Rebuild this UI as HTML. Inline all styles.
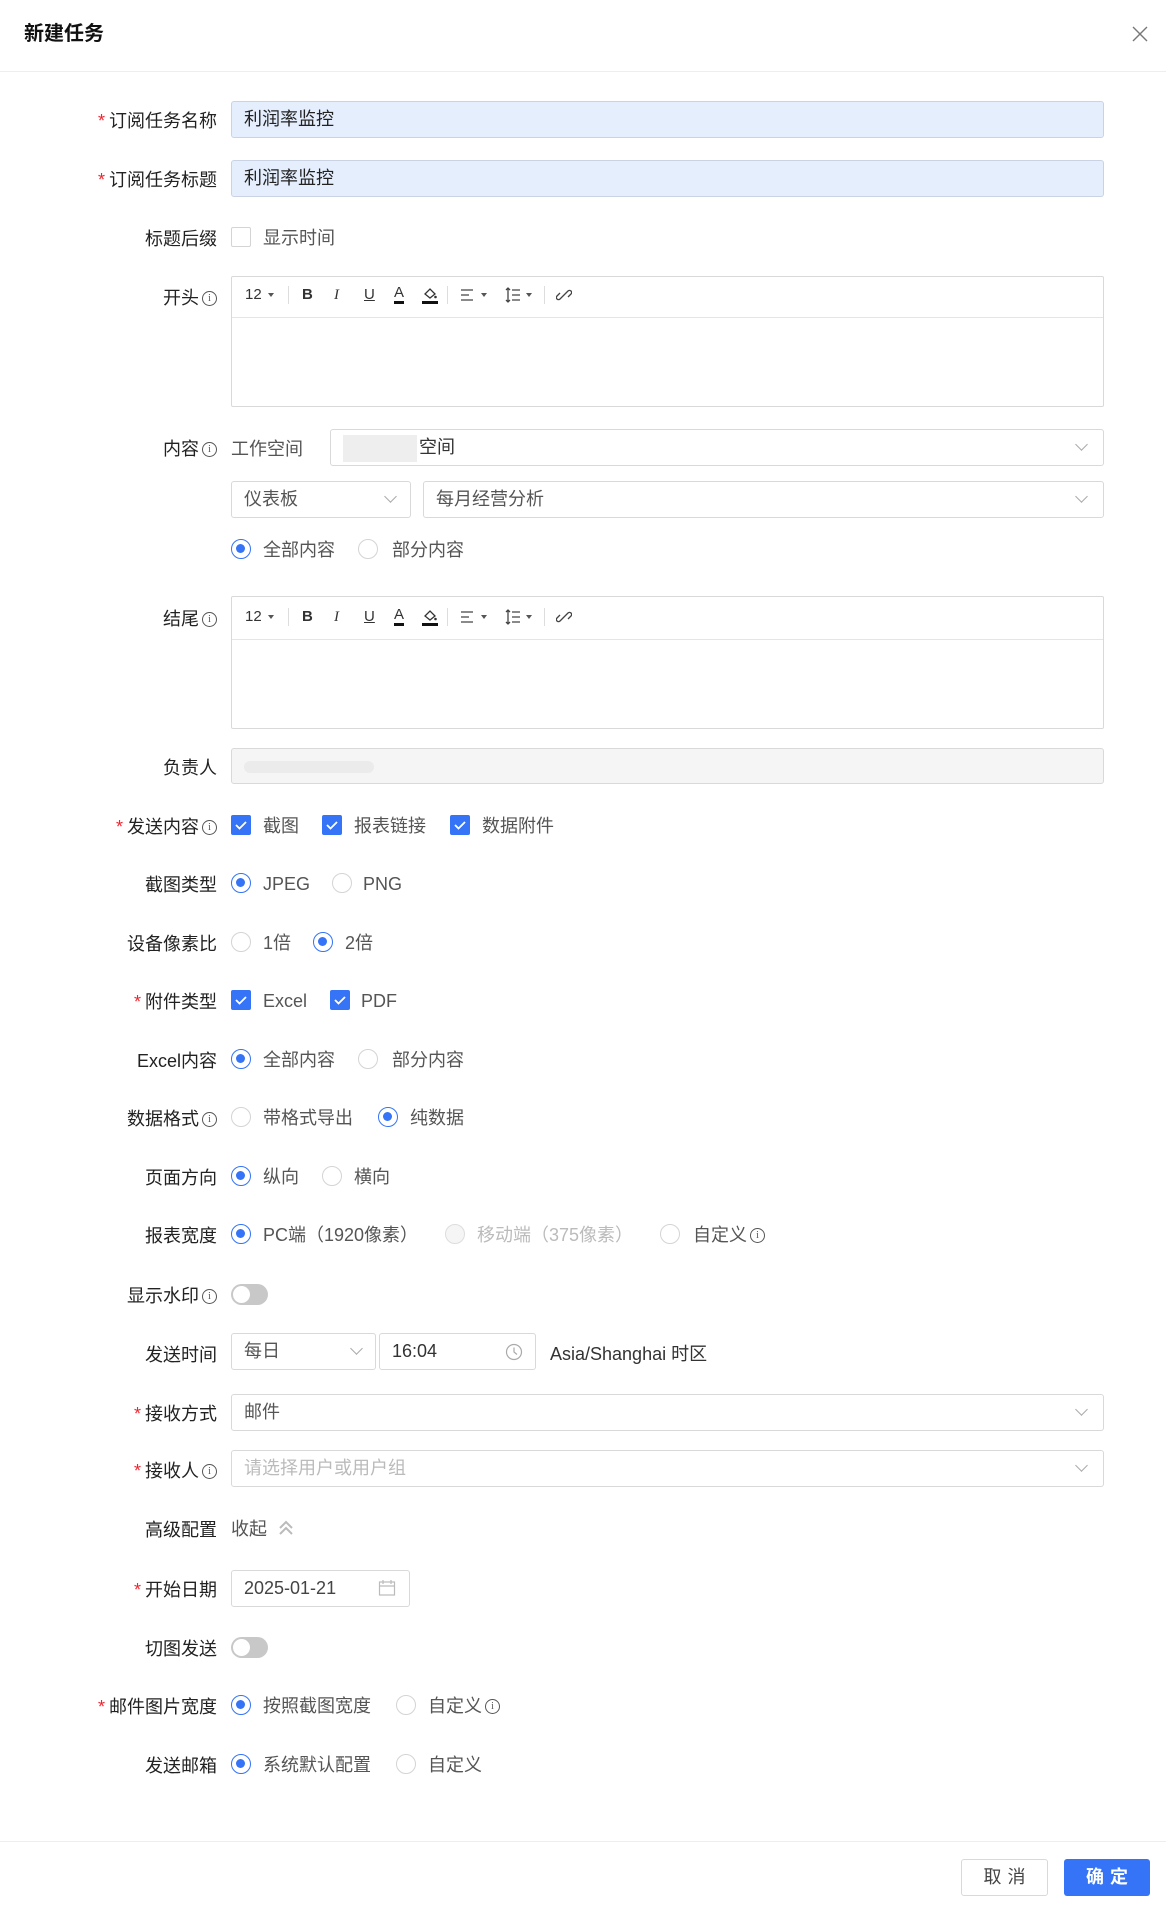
<!DOCTYPE html>
<html><head><meta charset="utf-8"><style>
*{box-sizing:border-box;margin:0;padding:0}
body{width:1166px;height:1912px;background:#fff;font-family:"Liberation Sans","Noto Sans CJK SC",sans-serif;color:#333;position:relative;overflow:hidden;font-size:18px}
.a{position:absolute}
.lb{position:absolute;right:949px;height:26px;line-height:26px;text-align:right;white-space:nowrap;color:#222;margin-top:2px}
.st{color:#f5222d;margin-right:4px}
.t{position:absolute;height:26px;line-height:26px;white-space:nowrap;color:#555;margin-top:1px}
.inp{position:absolute;border:1px solid #d9d9d9;border-radius:3px;background:#fff;padding-left:12px;line-height:35px;color:#333}
.blue{background:#e5eefd;border-color:#c9d3e3;color:#222}
.r{position:absolute;width:20px;height:20px;border:1px solid #d4d4d4;border-radius:50%;background:#fff}
.r.on{border:1.5px solid #3574f6}
.r.on:after{content:"";position:absolute;left:4px;top:4px;width:9px;height:9px;border-radius:50%;background:#3574f6}
.r.dis{background:#f5f5f5;border-color:#ddd}
.cb{position:absolute;width:20px;height:20px;border-radius:2px;background:#3574f6}
.cb svg{position:absolute;left:3px;top:3px}
.cbo{position:absolute;width:20px;height:20px;border:1px solid #d4d4d4;border-radius:2px;background:#fff}
.i{display:inline-block;width:15px;height:15px;border:1.3px solid #555;border-radius:50%;font-size:10px;line-height:13px;text-align:center;vertical-align:3px;margin-left:3px;font-family:"Liberation Serif",serif;color:#555;font-weight:normal}
.chev{position:absolute;width:9px;height:9px;border-right:1.3px solid #aaa;border-bottom:1.3px solid #aaa;transform:rotate(45deg)}
.tg{position:absolute;width:37px;height:21px;border-radius:11px;background:#c8c8c8}
.tg:after{content:"";position:absolute;left:2px;top:2px;width:17px;height:17px;border-radius:50%;background:#fff}
.ed{position:absolute;left:231px;width:873px;border:1px solid #d9d9d9;border-radius:2px}
.tb{position:absolute;font-size:15px;color:#333;line-height:20px}
.sep{position:absolute;width:1px;height:18px;background:#ddd}
.car{position:absolute;width:0;height:0;border-left:3.5px solid transparent;border-right:3.5px solid transparent;border-top:4px solid #555}
</style></head><body>
<div class="a" style="left:24px;top:21px;font-size:20px;font-weight:bold;color:#111;line-height:26px">新建任务</div>
<svg class="a" style="left:1132px;top:26px" width="16" height="16"><path d="M1 1L15 15M15 1L1 15" stroke="#777" stroke-width="1.4"/></svg>
<div class="a" style="left:0;top:71px;width:1166px;height:1px;background:#eee"></div>

<div class="lb" style="top:106px"><span class="st">*</span>订阅任务名称</div>
<div class="inp blue" style="left:231px;top:101px;width:873px;height:37px">利润率监控</div>
<div class="lb" style="top:165px"><span class="st">*</span>订阅任务标题</div>
<div class="inp blue" style="left:231px;top:160px;width:873px;height:37px">利润率监控</div>

<div class="lb" style="top:224px">标题后缀</div>
<div class="cbo" style="left:231px;top:227px"></div>
<div class="t" style="left:263px;top:224px">显示时间</div>

<div class="lb" style="top:283px">开头<span class="i">i</span></div>
<div class="ed" style="top:276px;height:131px"><div class="a" style="left:0;right:0;top:40px;height:1px;background:#e5e5e5"></div></div>

<div class="lb" style="top:434px">内容<span class="i">i</span></div>
<div class="t" style="left:231px;top:435px;color:#555">工作空间</div>
<div class="inp" style="left:330px;top:429px;width:774px;height:37px"><span style="display:inline-block;width:74px;height:27px;background:#eee;vertical-align:middle;margin-right:2px"></span>空间</div>
<div class="chev" style="left:1077px;top:440px"></div>
<div class="inp" style="left:231px;top:481px;width:180px;height:37px;color:#555">仪表板</div>
<div class="chev" style="left:386px;top:492px"></div>
<div class="inp" style="left:423px;top:481px;width:681px;height:37px;color:#555">每月经营分析</div>
<div class="chev" style="left:1077px;top:492px"></div>
<div class="r on" style="left:231px;top:539px"></div><div class="t" style="left:263px;top:536px">全部内容</div>
<div class="r" style="left:358px;top:539px"></div><div class="t" style="left:392px;top:536px">部分内容</div>

<div class="lb" style="top:604px">结尾<span class="i">i</span></div>
<div class="ed" style="top:596px;height:133px"><div class="a" style="left:0;right:0;top:42px;height:1px;background:#e5e5e5"></div></div>

<div class="lb" style="top:753px">负责人</div>
<div class="inp" style="left:231px;top:748px;width:873px;height:36px;background:#f5f5f5"><span style="display:inline-block;width:130px;height:12px;background:#ebebeb;border-radius:6px;vertical-align:middle"></span></div>

<div class="lb" style="top:812px"><span class="st">*</span>发送内容<span class="i">i</span></div>
<div class="cb" style="left:231px;top:815px"><svg width="14" height="14"><path d="M2 7l3.5 3.5L12 4" stroke="#fff" stroke-width="1.8" fill="none"/></svg></div><div class="t" style="left:263px;top:812px">截图</div>
<div class="cb" style="left:322px;top:815px"><svg width="14" height="14"><path d="M2 7l3.5 3.5L12 4" stroke="#fff" stroke-width="1.8" fill="none"/></svg></div><div class="t" style="left:354px;top:812px">报表链接</div>
<div class="cb" style="left:450px;top:815px"><svg width="14" height="14"><path d="M2 7l3.5 3.5L12 4" stroke="#fff" stroke-width="1.8" fill="none"/></svg></div><div class="t" style="left:482px;top:812px">数据附件</div>

<div class="lb" style="top:870px">截图类型</div>
<div class="r on" style="left:231px;top:873px"></div><div class="t" style="left:263px;top:870px">JPEG</div>
<div class="r" style="left:332px;top:873px"></div><div class="t" style="left:363px;top:870px">PNG</div>

<div class="lb" style="top:929px">设备像素比</div>
<div class="r" style="left:231px;top:932px"></div><div class="t" style="left:263px;top:929px">1倍</div>
<div class="r on" style="left:313px;top:932px"></div><div class="t" style="left:345px;top:929px">2倍</div>

<div class="lb" style="top:987px"><span class="st">*</span>附件类型</div>
<div class="cb" style="left:231px;top:990px"><svg width="14" height="14"><path d="M2 7l3.5 3.5L12 4" stroke="#fff" stroke-width="1.8" fill="none"/></svg></div><div class="t" style="left:263px;top:987px">Excel</div>
<div class="cb" style="left:330px;top:990px"><svg width="14" height="14"><path d="M2 7l3.5 3.5L12 4" stroke="#fff" stroke-width="1.8" fill="none"/></svg></div><div class="t" style="left:361px;top:987px">PDF</div>

<div class="lb" style="top:1046px">Excel内容</div>
<div class="r on" style="left:231px;top:1049px"></div><div class="t" style="left:263px;top:1046px">全部内容</div>
<div class="r" style="left:358px;top:1049px"></div><div class="t" style="left:392px;top:1046px">部分内容</div>

<div class="lb" style="top:1104px">数据格式<span class="i">i</span></div>
<div class="r" style="left:231px;top:1107px"></div><div class="t" style="left:263px;top:1104px">带格式导出</div>
<div class="r on" style="left:378px;top:1107px"></div><div class="t" style="left:410px;top:1104px">纯数据</div>

<div class="lb" style="top:1163px">页面方向</div>
<div class="r on" style="left:231px;top:1166px"></div><div class="t" style="left:263px;top:1163px">纵向</div>
<div class="r" style="left:322px;top:1166px"></div><div class="t" style="left:354px;top:1163px">横向</div>

<div class="lb" style="top:1221px">报表宽度</div>
<div class="r on" style="left:231px;top:1224px"></div><div class="t" style="left:263px;top:1221px">PC端（1920像素）</div>
<div class="r dis" style="left:445px;top:1224px"></div><div class="t" style="left:477px;top:1221px;color:#bbb">移动端（375像素）</div>
<div class="r" style="left:660px;top:1224px"></div><div class="t" style="left:693px;top:1221px">自定义<span class="i">i</span></div>

<div class="lb" style="top:1281px">显示水印<span class="i">i</span></div>
<div class="tg" style="left:231px;top:1284px"></div>

<div class="lb" style="top:1340px">发送时间</div>
<div class="inp" style="left:231px;top:1333px;width:145px;height:37px;color:#555">每日</div>
<div class="chev" style="left:352px;top:1344px"></div>
<div class="inp" style="left:379px;top:1333px;width:157px;height:37px;color:#333">16:04</div>
<svg class="a" style="left:505px;top:1343px" width="18" height="18"><circle cx="9" cy="9" r="7.5" stroke="#aaa" stroke-width="1.2" fill="none"/><path d="M9 4.5V9l3 2.5" stroke="#aaa" stroke-width="1.2" fill="none"/></svg>
<div class="t" style="left:550px;top:1340px;color:#333">Asia/Shanghai 时区</div>

<div class="lb" style="top:1399px"><span class="st">*</span>接收方式</div>
<div class="inp" style="left:231px;top:1394px;width:873px;height:37px;color:#555">邮件</div>
<div class="chev" style="left:1077px;top:1405px"></div>

<div class="lb" style="top:1456px"><span class="st">*</span>接收人<span class="i">i</span></div>
<div class="inp" style="left:231px;top:1450px;width:873px;height:37px;color:#bbb">请选择用户或用户组</div>
<div class="chev" style="left:1077px;top:1461px"></div>

<div class="lb" style="top:1515px">高级配置</div>
<div class="t" style="left:231px;top:1515px">收起</div>
<svg class="a" style="left:277px;top:1519px" width="18" height="18"><path d="M3 9l6-6 6 6M3 15l6-6 6 6" stroke="#bbb" stroke-width="2" fill="none"/></svg>

<div class="lb" style="top:1575px"><span class="st">*</span>开始日期</div>
<div class="inp" style="left:231px;top:1570px;width:179px;height:37px;color:#444">2025-01-21</div>
<svg class="a" style="left:378px;top:1579px" width="18" height="18"><rect x="1.5" y="3" width="15" height="13" stroke="#bbb" stroke-width="1.2" fill="none"/><path d="M1.5 7h15M5 1v4M13 1v4" stroke="#bbb" stroke-width="1.2"/></svg>

<div class="lb" style="top:1634px">切图发送</div>
<div class="tg" style="left:231px;top:1637px"></div>

<div class="lb" style="top:1692px"><span class="st">*</span>邮件图片宽度</div>
<div class="r on" style="left:231px;top:1695px"></div><div class="t" style="left:263px;top:1692px">按照截图宽度</div>
<div class="r" style="left:396px;top:1695px"></div><div class="t" style="left:428px;top:1692px">自定义<span class="i">i</span></div>

<div class="lb" style="top:1751px">发送邮箱</div>
<div class="r on" style="left:231px;top:1754px"></div><div class="t" style="left:263px;top:1751px">系统默认配置</div>
<div class="r" style="left:396px;top:1754px"></div><div class="t" style="left:428px;top:1751px">自定义</div>

<div class="a" style="left:0;top:1841px;width:1166px;height:1px;background:#eee"></div>
<div class="a" style="left:961px;top:1859px;width:87px;height:37px;border:1px solid #d9d9d9;border-radius:3px;text-align:center;line-height:35px;color:#444;letter-spacing:6px;padding-left:6px">取消</div>
<div class="a" style="left:1064px;top:1859px;width:86px;height:37px;background:#3574f6;border-radius:3px;text-align:center;line-height:37px;color:#fff;letter-spacing:6px;padding-left:6px;font-weight:bold">确定</div>

<div class="tb" style="left:245px;top:285px">12</div><div class="car" style="left:268px;top:293px"></div><div class="sep" style="left:288px;top:286px"></div>
<div class="tb" style="left:302px;top:285px;font-weight:bold">B</div>
<div class="tb" style="left:334px;top:285px;font-style:italic;font-family:'Liberation Serif',serif">I</div>
<div class="tb" style="left:364px;top:285px;text-decoration:underline">U</div>
<div class="tb" style="left:394px;top:284px;border-bottom:3px solid #111;line-height:17px">A</div>
<svg class="a" style="left:422px;top:286px" width="16" height="18"><path d="M3 8l5-5 5 5-5 4z" stroke="#333" stroke-width="1.3" fill="none"/><circle cx="13.5" cy="11" r="1.3" fill="#333"/><rect x="0" y="15" width="16" height="3" fill="#111"/></svg>
<div class="sep" style="left:447px;top:286px"></div>
<svg class="a" style="left:460px;top:287px" width="16" height="16"><path d="M1 3h12M1 8h8M1 13h12" stroke="#444" stroke-width="1.3"/></svg><div class="car" style="left:481px;top:293px"></div>
<svg class="a" style="left:505px;top:287px" width="16" height="16"><path d="M7 3h8M7 8h8M7 13h8M3 1v14M1 3l2-2 2 2M1 13l2 2 2-2" stroke="#444" stroke-width="1.3" fill="none"/></svg><div class="car" style="left:526px;top:293px"></div>
<div class="sep" style="left:544px;top:286px"></div>
<svg class="a" style="left:556px;top:287px" width="16" height="16"><path d="M7 9l-3 3a2 2 0 0 1-3-3l3-3M9 7l3-3a2 2 0 0 1 3 3l-3 3M6 10l4-4" stroke="#444" stroke-width="1.3" fill="none"/></svg>

<div class="tb" style="left:245px;top:607px">12</div><div class="car" style="left:268px;top:615px"></div><div class="sep" style="left:288px;top:608px"></div>
<div class="tb" style="left:302px;top:607px;font-weight:bold">B</div>
<div class="tb" style="left:334px;top:607px;font-style:italic;font-family:'Liberation Serif',serif">I</div>
<div class="tb" style="left:364px;top:607px;text-decoration:underline">U</div>
<div class="tb" style="left:394px;top:606px;border-bottom:3px solid #111;line-height:17px">A</div>
<svg class="a" style="left:422px;top:608px" width="16" height="18"><path d="M3 8l5-5 5 5-5 4z" stroke="#333" stroke-width="1.3" fill="none"/><circle cx="13.5" cy="11" r="1.3" fill="#333"/><rect x="0" y="15" width="16" height="3" fill="#111"/></svg>
<div class="sep" style="left:447px;top:608px"></div>
<svg class="a" style="left:460px;top:609px" width="16" height="16"><path d="M1 3h12M1 8h8M1 13h12" stroke="#444" stroke-width="1.3"/></svg><div class="car" style="left:481px;top:615px"></div>
<svg class="a" style="left:505px;top:609px" width="16" height="16"><path d="M7 3h8M7 8h8M7 13h8M3 1v14M1 3l2-2 2 2M1 13l2 2 2-2" stroke="#444" stroke-width="1.3" fill="none"/></svg><div class="car" style="left:526px;top:615px"></div>
<div class="sep" style="left:544px;top:608px"></div>
<svg class="a" style="left:556px;top:609px" width="16" height="16"><path d="M7 9l-3 3a2 2 0 0 1-3-3l3-3M9 7l3-3a2 2 0 0 1 3 3l-3 3M6 10l4-4" stroke="#444" stroke-width="1.3" fill="none"/></svg>
</body></html>
